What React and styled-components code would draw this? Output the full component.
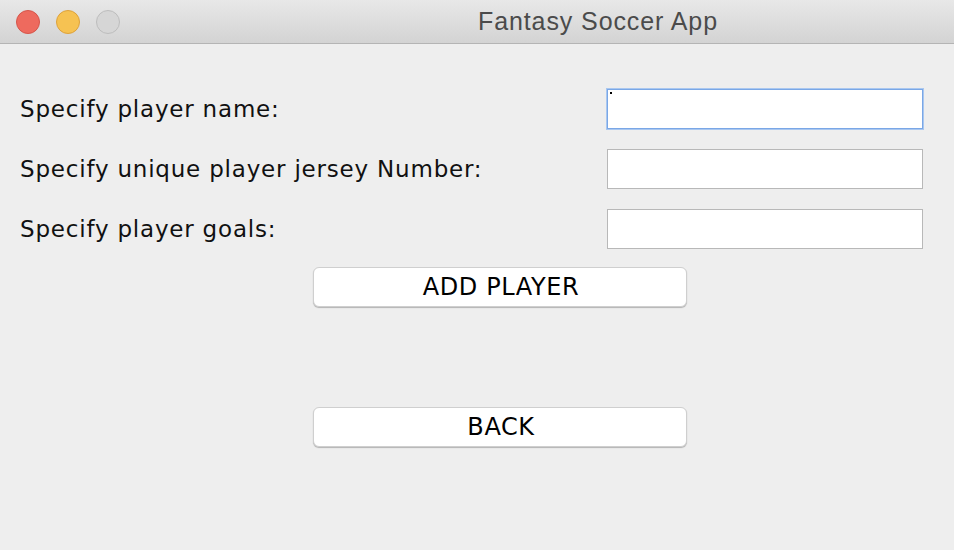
import React from "react";
import styled, { createGlobalStyle } from "styled-components";

const GlobalStyle = createGlobalStyle`
  html, body {
    margin: 0;
    padding: 0;
    background: #eeeeee;
  }
  body {
    font-family: "DejaVu Sans", "Liberation Sans", sans-serif;
  }
`;

const Window = styled.div`
  width: 954px;
  height: 550px;
  display: flex;
  flex-direction: column;
  background: #eeeeee;
  overflow: hidden;
`;

const TitleBar = styled.div`
  height: 43px;
  flex-shrink: 0;
  display: flex;
  align-items: center;
  padding-left: 16px;
  background: linear-gradient(#e8e8e8, #d3d3d3);
  border-bottom: 1px solid #b4b4b4;
  box-sizing: content-box;
`;

const Lights = styled.div`
  display: flex;
  gap: 16px;
`;

const Light = styled.span`
  width: 24px;
  height: 24px;
  border-radius: 50%;
  box-sizing: border-box;
  background: ${(p) => p.$fill};
  border: 1px solid ${(p) => p.$edge};
`;

const Title = styled.div`
  flex: 1;
  padding-left: 358px;
  font-family: "Liberation Sans", "Noto Sans", sans-serif;
  font-size: 25px;
  letter-spacing: 0.9px;
  color: #4b4b4b;
`;

const Content = styled.div`
  display: flex;
  flex-direction: column;
  padding: 45px 31px 0 20px;
`;

const Rows = styled.div`
  display: flex;
  flex-direction: column;
  gap: 20px;
`;

const Row = styled.div`
  display: flex;
  align-items: center;
  justify-content: space-between;
  height: 40px;
`;

const Label = styled.label`
  font-size: 23px;
  letter-spacing: 0.8px;
  color: #111111;
`;

const Field = styled.div`
  position: relative;
  width: 316px;
  height: 40px;
  box-sizing: border-box;
  background: #ffffff;
  border: 1px solid ${(p) => (p.$focused ? "#7aa7e6" : "#b8b8b8")};
  box-shadow: ${(p) => (p.$focused ? "0 0 0 1px #a9c7f0" : "none")};
`;

const Caret = styled.span`
  position: absolute;
  left: 2px;
  top: 2px;
  width: 2px;
  height: 2px;
  background: #000;
`;

const Buttons = styled.div`
  display: flex;
  flex-direction: column;
  align-items: center;
  gap: 100px;
  margin-top: 18px;
  margin-left: -20px;
  margin-right: -31px;
`;

const Button = styled.button`
  width: 374px;
  height: 40px;
  margin-left: 45px;
  background: #ffffff;
  border: 1px solid #cfcfcf;
  border-radius: 6px;
  box-shadow: 0 1px 1px rgba(0, 0, 0, 0.25);
  font-family: "DejaVu Sans", "Liberation Sans", sans-serif;
  font-size: 24px;
  letter-spacing: 0.6px;
  color: #000000;
  padding: 0 0 0 3px;
`;

export default function App() {
  return (
    <>
      <GlobalStyle />
      <Window>
        <TitleBar>
          <Lights>
            <Light $fill="#ee6a5e" $edge="#d6554a" />
            <Light $fill="#f6c252" $edge="#dea23b" />
            <Light $fill="#d6d6d6" $edge="#bdbdbd" />
          </Lights>
          <Title>Fantasy Soccer App</Title>
        </TitleBar>
        <Content>
          <Rows>
            <Row>
              <Label>Specify player name:</Label>
              <Field $focused>
                <Caret />
              </Field>
            </Row>
            <Row>
              <Label>Specify unique player jersey Number:</Label>
              <Field />
            </Row>
            <Row>
              <Label>Specify player goals:</Label>
              <Field />
            </Row>
          </Rows>
          <Buttons>
            <Button>ADD PLAYER</Button>
            <Button>BACK</Button>
          </Buttons>
        </Content>
      </Window>
    </>
  );
}
